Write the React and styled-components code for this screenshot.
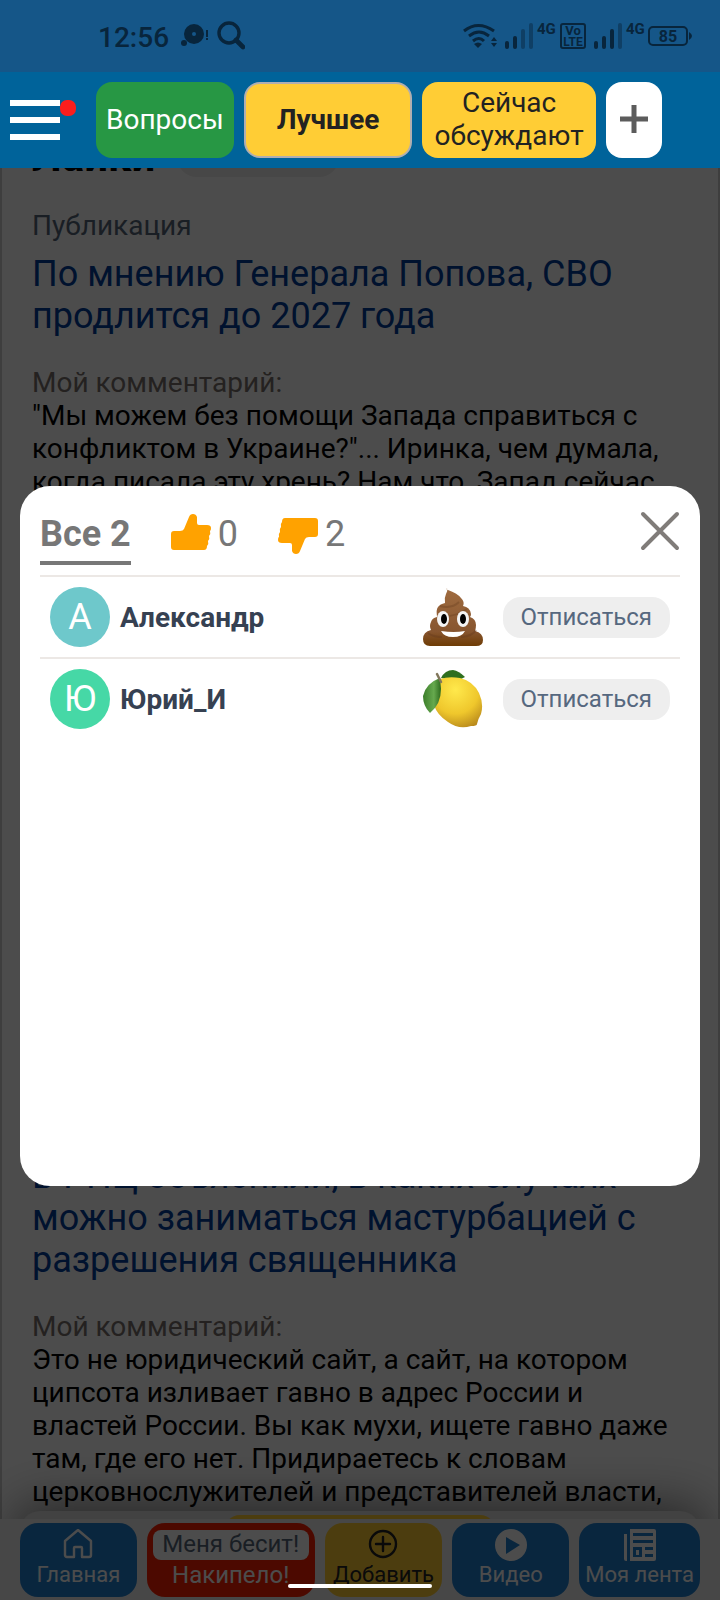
import React, { useState } from 'react';
import styled, { createGlobalStyle } from 'styled-components';

const GlobalStyle = createGlobalStyle`
  * {
    box-sizing: border-box;
  }
  body {
    margin: 0;
    background: #fff;
    font-family: Roboto, 'Liberation Sans', sans-serif;
    font-size: 28px;
    line-height: 33px;
    color: #000;
  }
  button {
    font: inherit;
    border: 0;
    margin: 0;
    padding: 0;
    background: none;
    cursor: pointer;
  }
  h1, h2, p {
    margin: 0;
  }
  svg {
    display: block;
  }
`

const Page = styled.div`
  display: flex;
  flex-direction: column;
  height: 100vh;
  overflow: hidden;
`

const StatusBar = styled.div`
  flex: none;
  display: flex;
  justify-content: space-between;
  align-items: center;
  height: 72px;
  padding: 0 28px 0 98px;
  background: #155688;
  color: #08253c;
`
const StatusGroup = styled.div`
  display: flex;
  align-items: center;
  gap: 12px;
`
const Clock = styled.span`
  font-weight: 500;
  padding-top: 2px;
`

const Header = styled.header`
  flex: none;
  position: relative;
  z-index: 3;
  display: flex;
  align-items: center;
  height: 96px;
  padding: 0 10px;
  gap: 10px;
  background: #00639a;
`
const MenuButton = styled.button`
  position: relative;
  width: 50px;
  height: 40px;
  margin-right: 26px;
`
const Bar = styled.span`
  display: block;
  height: 6px;
  margin-bottom: 11px;
  background: #fff;
  &:last-of-type {
    margin-bottom: 0;
  }
`
const Dot = styled.i`
  position: absolute;
  left: 100%;
  top: 0;
  width: 16px;
  height: 16px;
  border-radius: 7px;
  background: #fb1d1d;
`
const Pill = styled.button`
  height: 76px;
  padding: 0 ${p => p.$pad || 10}px 2px;
  border-radius: 16px;
  border: ${p => (p.$active ? '2px solid #b0aeb0' : '0')};
  background: ${p => p.$bg};
  color: ${p => p.$color || '#222'};
  font-size: 28px;
  font-weight: ${p => (p.$active ? 700 : 400)};
`

const Feed = styled.main`
  flex: 1;
  min-height: 0;
  overflow: hidden;
  padding: 0 30px;
  border: solid #d0d0d0;
  border-width: 0 2px;
`
const FeedHead = styled.div`
  display: flex;
  align-items: center;
  gap: 22px;
  height: 47px;
  margin-top: -35px;
`
const FeedTitle = styled.h1`
  font-size: 42px;
  line-height: 47px;
`
const FeedBadge = styled.span`
  width: 162px;
  height: 40px;
  border-radius: 20px;
  background: #eee;
`
const Post = styled.article`
  padding: 29px 0 23px;
`
const PostKind = styled.p`
  color: #566678;
`
const PostTitle = styled.h2`
  margin: 11px 0 29px;
  font-size: 36px;
  line-height: 42px;
  font-weight: 400;
  a {
    color: #003c9c;
    text-decoration: none;
  }
`
const Label = styled.p`
  color: #78716c;
`
const Comment = styled.p`
  height: ${p => p.$rows * 33}px;
  overflow: hidden;
`

const Bottom = styled.footer`
  flex: none;
  position: relative;
  height: 81px;
`
const Toast = styled.div`
  position: absolute;
  left: 20px;
  right: 20px;
  top: -8px;
  height: 60px;
  padding: 4px 204px;
  border-radius: 20px;
  background: #dcdcdc;
  box-shadow: 0 0 50px 6px rgba(0, 0, 0, 0.5);
`
const ToastButton = styled.button`
  display: block;
  width: 100%;
  height: 50px;
  border-radius: 16px;
  background: #ffcc35;
`
const Nav = styled.nav`
  position: relative;
  display: grid;
  grid-template-columns:
    minmax(0, 117fr) minmax(0, 168fr) minmax(0, 118fr)
    minmax(0, 117fr) minmax(0, 121fr);
  gap: 10px;
  height: 100%;
  padding: 4px 20px;
  background: #eee;
`
const NavItem = styled.a`
  display: flex;
  flex-direction: column;
  align-items: center;
  justify-content: space-between;
  padding: ${p => (p.$large ? 7 : 6)}px 6px 8px;
  border-radius: 18px;
  background: ${p => p.$bg};
  color: ${p => p.$color || '#fff'};
  font-size: ${p => (p.$large ? 24 : 22)}px;
  line-height: 28px;
  text-decoration: none;
  white-space: nowrap;
`
const NavTag = styled.span`
  align-self: stretch;
  height: 30px;
  border-radius: 8px;
  background: #fff;
  color: #566678;
  text-align: center;
`

const Overlay = styled.div`
  position: fixed;
  inset: 72px 0 0;
  z-index: 2;
  display: flex;
  align-items: center;
  padding: 0 20px;
  background: rgba(0, 0, 0, 0.7);
`
const Modal = styled.div`
  width: 100%;
  height: 700px;
  padding: 20px;
  border-radius: 30px;
  background: #fff;
`
const ModalHead = styled.div`
  display: flex;
  align-items: flex-start;
  gap: 40px;
  height: 69px;
`
const Tab = styled.button`
  display: flex;
  align-items: center;
  gap: 7px;
  height: 59px;
  border-bottom: 4px solid ${p => (p.$active ? '#777' : 'transparent')};
  color: #777;
  font-size: 36px;
  line-height: 42px;
  font-weight: ${p => (p.$active ? 700 : 400)};
`
const Close = styled.button`
  margin: 5px 0 0 auto;
`
const UserList = styled.ul`
  list-style: none;
  margin: 0;
  padding: 0;
`
const User = styled.li`
  display: flex;
  align-items: center;
  height: 82px;
  padding: 0 10px;
  border-top: 2px solid #ece8e5;
`
const Avatar = styled.span`
  width: 60px;
  height: 60px;
  margin-right: 10px;
  border-radius: 50%;
  background: ${p => p.$bg};
  color: #fff;
  font-size: 36px;
  line-height: 60px;
  text-align: center;
`
const Name = styled.b`
  flex: 1;
  color: #364152;
`
const Unfollow = styled.button`
  height: 41px;
  margin-left: 20px;
  padding: 0 18px;
  border-radius: 18px;
  background: #eee;
  color: #56687f;
  font-size: 24px;
`
const HomeBar = styled.i`
  position: fixed;
  z-index: 4;
  left: 40%;
  bottom: 12px;
  width: 20%;
  height: 4px;
  border-radius: 2px;
  background: #fff;
`

const Notices = () => (
  <svg width="64" height="32" viewBox="0 0 64 32" fill="#08253c">
    <circle cx="13" cy="14" r="10" />
    <circle cx="13" cy="14" r="2" fill="#155688" />
    <circle cx="3" cy="23" r="3" />
    <path d="M25 10h2v7h-2zM25 18h2v2h-2z" />
    <circle cx="48" cy="13" r="10" fill="none" stroke="#08253c" strokeWidth="3.4" />
    <path d="M55 20l7 7" stroke="#08253c" strokeWidth="4.6" strokeLinecap="round" />
  </svg>
)

const Signals = () => (
  <svg width="230" height="32" viewBox="462 20 230 32" fill="#08253c">
    <g fill="none" stroke="#08253c" strokeWidth="3">
      <path d="M464 31q14-11 30 0M469 36q10-8 20 0M473 41q6-5 11 0" />
      <path d="M561 46v-20q0-2 2-2h20q2 0 2 2v20q0 2-2 2h-20q-2 0-2-2z" strokeWidth="2" />
      <rect x="649" y="27" width="38" height="18" rx="4" strokeWidth="2" />
    </g>
    <path d="M478 48l-4-4q4-3 8 0zM491 41l3-4 3 4zM491 43l3 4 3-4z" />
    <g stroke="#08253c" strokeWidth="4" strokeLinecap="round">
      <path d="M507 43v4M515 38v9M596 43v4M604 38v9M612 31v16" />
      <path d="M523 31v16M531 25v22M620 25v22" opacity=".45" />
    </g>
    <path d="M689 32q3 2 3 4t-3 4z" />
    <g fontFamily="Roboto, sans-serif" fontWeight="700">
      <text x="537" y="34" fontSize="15">4G</text>
      <text x="626" y="34" fontSize="15">4G</text>
      <text x="573" y="35" fontSize="13" textAnchor="middle">Vo</text>
      <text x="573" y="46" fontSize="12" textAnchor="middle">LTE</text>
      <text x="668" y="42" fontSize="16" textAnchor="middle">85</text>
    </g>
  </svg>
)

const Thumb = ({ down }) => (
  <svg width="40" height="42" viewBox="1 1 40 42" fill="#ffa200">
    <path
      transform={down ? 'rotate(180 21 22)' : undefined}
      d="M4 19h6q3 0 4-2l5-12q1-3 4-3t4 3v6q0 2 2 2h8q4 0 4 3t-1 3q1 3-1 5 1 3-1 5 1 3-1 5 0 4-3 4H4q-3 0-3-3V22q0-3 3-3z"
    />
  </svg>
)

const Poo = () => (
  <svg width="60" height="60" viewBox="0 0 60 60">
    <defs>
      <linearGradient id="poo" x1="0" y1="0" x2="0" y2="1">
        <stop offset="0" stopColor="#a06c40" />
        <stop offset=".75" stopColor="#87552f" />
        <stop offset="1" stopColor="#6e3c05" />
      </linearGradient>
    </defs>
    <path
      fill="url(#poo)"
      d="M24 1q-1 2 1 2 9 3 13 8 4 4 2 8 7 1 8 8 0 2-1 3 6 2 6 8 0 3-1 6 8 2 8 9 0 6-7 6H7q-7 0-7-7 0-7 8-9-2-4 0-8 1-4 6-5-1-8 1-10 2-3 7-4-1-5 1-9 2-3 1-6z"
    />
    <path d="M17 19q12 3 19-4M15 29q16 2 29-7" fill="none" stroke="#6b4021" strokeWidth="2" opacity=".4" />
    <path d="M5 46q5 4 14 4M38 50q12-1 15-7" fill="none" stroke="#633a1d" strokeWidth="2" opacity=".4" />
    <ellipse cx="20" cy="32" rx="6" ry="8" fill="#f4f4f4" />
    <ellipse cx="40" cy="32" rx="6" ry="8" fill="#f4f4f4" />
    <ellipse cx="21" cy="32" rx="3" ry="5" />
    <ellipse cx="40" cy="32" rx="3" ry="5" />
    <path d="M18 44q13 2 24 0-3 6-12 6t-12-6z" fill="#fff" />
  </svg>
)

const Lemon = () => (
  <svg width="60" height="60" viewBox="0 0 60 60">
    <defs>
      <radialGradient id="lemon" cx=".45" cy=".25" r=".8">
        <stop offset="0" stopColor="#ffe94c" />
        <stop offset=".6" stopColor="#efc72c" />
        <stop offset="1" stopColor="#b98a1c" />
      </radialGradient>
      <linearGradient id="leaf">
        <stop offset="0" stopColor="#3b7d2a" />
        <stop offset=".6" stopColor="#66a94e" />
        <stop offset="1" stopColor="#2d6b1d" />
      </linearGradient>
    </defs>
    <path d="M18 9q4-8 12-8 6 1 12 7l-8 4z" fill="#2f6f1f" />
    <path
      d="M17 10q9-3 20-1 13 3 19 15 5 11 2 21-3 5-4 10 0 2-6 2-12 4-23-4Q14 46 11 36q-2-16 6-26z"
      fill="url(#lemon)"
    />
    <path d="M17 9Q3 14 0 27q0 10 7 17 11-9 11-24z" fill="url(#leaf)" />
    <path d="M14 5l4 8" stroke="#82775c" strokeWidth="2.5" strokeLinecap="round" />
  </svg>
)

const HomeIcon = () => (
  <svg width="30" height="30" viewBox="0 0 30 30" fill="none" stroke="#fff" strokeWidth="2.4" strokeLinejoin="round">
    <path d="M2 12L15 1l13 11v14q0 2-2 2h-7v-9q0-1-1-1h-6q-1 0-1 1v9H4q-2 0-2-2z" />
  </svg>
)
const AddIcon = () => (
  <svg width="30" height="30" viewBox="0 0 30 30" fill="none" stroke="#222" strokeWidth="2.4" strokeLinecap="round">
    <circle cx="15" cy="15" r="13" />
    <path d="M15 8v14M8 15h14" />
  </svg>
)
const PlayIcon = () => (
  <svg width="32" height="32" viewBox="0 0 32 32">
    <circle cx="16" cy="16" r="16" fill="#fff" />
    <path d="M11 8l14 8-14 9z" fill="#217fcf" />
  </svg>
)
const NewsIcon = () => (
  <svg width="32" height="32" viewBox="0 0 32 32">
    <path d="M0 5h3v27H2q-2 0-2-2zM6 0h24q2 0 2 2v28q0 2-2 2H6z" fill="#fff" />
    <path d="M9 4h20v3H9zM9 11h20v3H9zM9 18h9v10H9zM21 18h8v3h-8zM21 25h8v3h-8z" fill="#217fcf" />
    <path d="M12 21h3v5h-3z" fill="#fff" />
  </svg>
)

const users = [
  { name: 'Александр', letter: 'А', color: '#6ec8cb', Icon: Poo },
  { name: 'Юрий_И', letter: 'Ю', color: '#46d8a6', Icon: Lemon },
]

const posts = [
  {
    title: 'По мнению Генерала Попова, СВО продлится до 2027 года',
    comment: '"Мы можем без помощи Запада справиться с конфликтом в Украине?"... Иринка, чем думала, когда писала эту хрень? Нам что, Запад сейчас',
    rows: 20,
  },
  {
    title: 'В РПЦ объяснили, в каких случаях можно заниматься мастурбацией с разрешения священника',
    comment: 'Это не юридический сайт, а сайт, на котором ципсота изливает гавно в адрес России и властей России. Вы как мухи, ищете гавно даже там, где его нет. Придираетесь к словам церковнослужителей и представителей власти,',
    rows: 6,
  },
]

const LikesModal = ({ onClose }) => (
  <Overlay>
    <Modal role="dialog" aria-label="Реакции">
      <ModalHead>
        <Tab $active>Все 2</Tab>
        <Tab aria-label="Нравится 0"><Thumb />0</Tab>
        <Tab aria-label="Не нравится 2"><Thumb down />2</Tab>
        <Close aria-label="Закрыть" onClick={onClose}>
          <svg width="40" height="40" viewBox="0 0 40 40" stroke="#807c79" strokeWidth="4" strokeLinecap="round">
            <path d="M3 3l34 34M37 3L3 37" />
          </svg>
        </Close>
      </ModalHead>
      <UserList>
        {users.map(({ name, letter, color, Icon }) => (
          <User key={name}>
            <Avatar $bg={color}>{letter}</Avatar>
            <Name>{name}</Name>
            <Icon />
            <Unfollow>Отписаться</Unfollow>
          </User>
        ))}
      </UserList>
    </Modal>
  </Overlay>
)

const App = () => {
  const [open, setOpen] = useState(true)

  return (
    <Page>
      <GlobalStyle />
      <StatusBar>
        <StatusGroup>
          <Clock>12:56</Clock>
          <Notices />
        </StatusGroup>
        <Signals />
      </StatusBar>
      <Header>
        <MenuButton aria-label="Меню">
          <Bar />
          <Bar />
          <Bar />
          <Dot />
        </MenuButton>
        <Pill $bg="#279744" $color="#fff">Вопросы</Pill>
        <Pill $bg="#ffcd35" $pad={31} $active>Лучшее</Pill>
        <Pill $bg="#ffcd35" $pad={12}>Сейчас<br />обсуждают</Pill>
        <Pill $bg="#fff" $pad={14} aria-label="Добавить раздел">
          <svg width="28" height="28" viewBox="0 0 28 28" stroke="#5c5c5c" strokeWidth="5">
            <path d="M14 0v28M0 14h28" />
          </svg>
        </Pill>
      </Header>
      <Feed>
        <FeedHead>
          <FeedTitle>Лайки</FeedTitle>
          <FeedBadge />
        </FeedHead>
        {posts.map(post => (
          <Post key={post.title}>
            <PostKind>Публикация</PostKind>
            <PostTitle><a href="#post">{post.title}</a></PostTitle>
            <Label>Мой комментарий:</Label>
            <Comment $rows={post.rows}>{post.comment}</Comment>
          </Post>
        ))}
      </Feed>
      <Bottom>
        <Toast>
          <ToastButton aria-label="Подробнее" />
        </Toast>
        <Nav>
          <NavItem href="#home" $bg="#217fcf"><HomeIcon />Главная</NavItem>
          <NavItem href="#rage" $bg="#ff2000" $large>
            <NavTag>Меня бесит!</NavTag>
            Накипело!
          </NavItem>
          <NavItem href="#add" $bg="#ffcc35" $color="#222"><AddIcon />Добавить</NavItem>
          <NavItem href="#video" $bg="#217fcf"><PlayIcon />Видео</NavItem>
          <NavItem href="#feed" $bg="#217fcf"><NewsIcon />Моя лента</NavItem>
        </Nav>
      </Bottom>
      {open && <LikesModal onClose={() => setOpen(false)} />}
      <HomeBar />
    </Page>
  )
}

export default App
